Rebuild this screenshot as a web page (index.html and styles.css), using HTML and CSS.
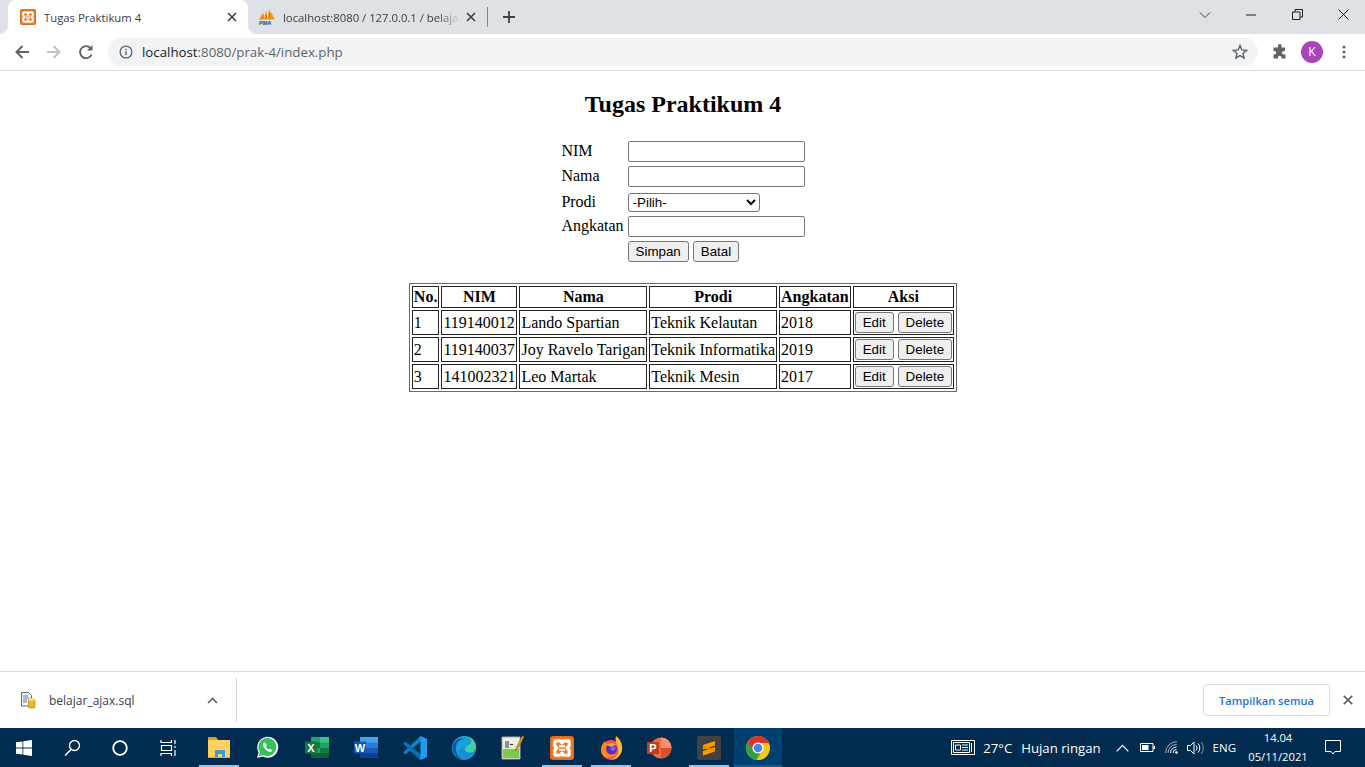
FILE: index.html
```html
<!DOCTYPE html>
<html lang="id">
<head>
<meta charset="utf-8">
<title>Tugas Praktikum 4</title>
<link rel="stylesheet" href="styles.css">
</head>
<body>
<svg class="defs" width="0" height="0" aria-hidden="true">
  <symbol id="xampp" viewBox="0 0 16 16">
    <rect width="16" height="16" rx="2" fill="#e4691f"/>
    <rect x="1" y="1" width="14" height="14" rx="1.5" fill="#f07a28"/>
    <path d="M4.2 3.2h2.4c1 0 .9 1.5 1.4 1.5s.4-1.5 1.4-1.5h2.4c.6 0 1 .4 1 1v2.3c0 .9-1.5.9-1.5 1.5s1.5.6 1.5 1.5v2.3c0 .6-.4 1-1 1H9.400c-1 0-.9-1.500-1.400-1.500s-.4 1.500-1.400 1.500H4.200c-.6 0-1-.4-1-1V9.500c0-.9 1.500-.9 1.500-1.500s-1.500-.6-1.500-1.500V4.200c0-.6.4-1 1-1z" fill="none" stroke="#fff" stroke-width="2.100"/>
    <path d="M6 6.800h4M6 9.200h4" stroke="#fff" stroke-width="1.300"/>
  </symbol>
</svg>

<header class="tabstrip">
  <div class="tab tab-active">
    <svg class="favicon" width="16" height="16"><use href="#xampp"/></svg>
    <span class="tab-title">Tugas Praktikum 4</span>
    <svg class="tab-x" width="10" height="10" viewBox="0 0 10 10"><path d="M1 1l8 8M9 1L1 9" stroke="#3c4043" stroke-width="1.600"/></svg>
  </div>
  <div class="tab tab-idle">
    <svg class="favicon" width="16" height="16" viewBox="0 0 16 16">
      <path d="M0 10.500L4 3.500l1.500 7zM5 10.500L7 1l1.500 9.500zM8.500 10.500L10 0l6 10.500z" fill="#f29a1c"/>
      <path d="M3 10.500L4.500 6M7 10.500l.5-5M11 10.500L10.500 4" stroke="#c8620f" stroke-width=".8"/>
      <text class="pma" x="0" y="15.500">PMA</text>
    </svg>
    <span class="tab-title tab-fade">localhost:8080 / 127.0.0.1 / belaja</span>
    <svg class="tab-x" width="10" height="10" viewBox="0 0 10 10"><path d="M1 1l8 8M9 1L1 9" stroke="#3c4043" stroke-width="1.600"/></svg>
  </div>
  <span class="tab-sep"></span>
  <div class="newtab">
    <svg width="12" height="12" viewBox="0 0 12 12"><path d="M6 0v12M0 6h12" stroke="#3c4043" stroke-width="1.800"/></svg>
  </div>
  <div class="winctl">
    <div class="winbtn"><svg width="12" height="8" viewBox="0 0 12 8"><path d="M1 1.500l5 5 5-5" fill="none" stroke="#3c4043" stroke-width="1"/></svg></div>
    <div class="winbtn"><svg width="10" height="2" viewBox="0 0 10 2"><path d="M0 1h10" stroke="#202124" stroke-width="1"/></svg></div>
    <div class="winbtn"><svg width="11" height="11" viewBox="0 0 11 11"><path d="M.5 3h7.500v7.500H.5zM3 3V.5h7.500V8H8" fill="none" stroke="#202124" stroke-width="1"/></svg></div>
    <div class="winbtn"><svg width="11" height="11" viewBox="0 0 11 11"><path d="M.5.500l10 10M10.500.500l-10 10" stroke="#202124" stroke-width="1"/></svg></div>
  </div>
</header>

<nav class="toolbar">
  <div class="navbtn"><svg width="16" height="16" viewBox="0 0 16 16"><path d="M15 8H2.500M8.500 2l-6 6 6 6" fill="none" stroke="#5f6368" stroke-width="2"/></svg></div>
  <div class="navbtn"><svg width="16" height="16" viewBox="0 0 16 16"><path d="M1 8h12.500M7.500 2l6 6-6 6" fill="none" stroke="#bdc1c6" stroke-width="2"/></svg></div>
  <div class="navbtn"><svg width="16" height="16" viewBox="0 0 16 16"><path d="M13.600 10.500A6 6 0 1 1 13 4.700" fill="none" stroke="#5f6368" stroke-width="1.900"/><path d="M14.500 1v5.500H9z" fill="#5f6368"/></svg></div>
  <div class="omnibox">
    <svg width="14" height="14" viewBox="0 0 14 14"><circle cx="7" cy="7" r="5.900" fill="none" stroke="#5f6368" stroke-width="1.300"/><path d="M7 6.200v4M7 3.800v1.400" stroke="#5f6368" stroke-width="1.400"/></svg>
    <span class="url">localhost<span class="url-dim">:8080/prak-4/index.php</span></span>
    <svg class="star" width="16" height="16" viewBox="0 0 16 16"><path d="M8 1.600l1.900 4.300 4.700.4-3.600 3.100 1.100 4.600L8 11.600l-4.100 2.400L5 9.400 1.400 6.300l4.700-.4z" fill="none" stroke="#5f6368" stroke-width="1.400"/></svg>
  </div>
  <div class="toolbar-right">
    <div class="navbtn"><svg width="16" height="16" viewBox="0 0 16 16"><path d="M6 1.500a1.800 1.800 0 0 1 3.500 0V3.500h3.500V7h-1.200a1.800 1.800 0 0 0 0 3.600H13.500V14.500H9.500v-1a1.800 1.800 0 0 0-3.600 0v1H1.500V10.500h1a1.800 1.800 0 0 0 0-3.600h-1V3.500H6z" fill="#5f6368"/></svg></div>
    <div class="navbtn"><span class="avatar">K</span></div>
    <div class="navbtn"><svg width="4" height="14" viewBox="0 0 4 14"><circle cx="2" cy="2" r="1.500" fill="#5f6368"/><circle cx="2" cy="7" r="1.500" fill="#5f6368"/><circle cx="2" cy="12" r="1.500" fill="#5f6368"/></svg></div>
  </div>
</nav>

<main class="page">
  <h2 class="title">Tugas Praktikum 4</h2>
  <form class="form-wrap">
    <table class="form-table">
      <tr><td>NIM</td><td><input class="field" type="text"></td></tr>
      <tr><td>Nama</td><td><input class="field" type="text"></td></tr>
      <tr><td>Prodi</td><td><select class="pick"><option>-Pilih-</option></select></td></tr>
      <tr><td>Angkatan</td><td><input class="field" type="text"></td></tr>
      <tr><td></td><td><button class="btn" type="button">Simpan</button> <button class="btn" type="button">Batal</button></td></tr>
    </table>
  </form>
  <table class="data-table">
    <tr><th>No.</th><th>NIM</th><th>Nama</th><th>Prodi</th><th>Angkatan</th><th>Aksi</th></tr>
    <tr><td>1</td><td>119140012</td><td>Lando Spartian</td><td>Teknik Kelautan</td><td>2018</td><td><button class="btn" type="button">Edit</button> <button class="btn" type="button">Delete</button></td></tr>
    <tr><td>2</td><td>119140037</td><td>Joy Ravelo Tarigan</td><td>Teknik Informatika</td><td>2019</td><td><button class="btn" type="button">Edit</button> <button class="btn" type="button">Delete</button></td></tr>
    <tr><td>3</td><td>141002321</td><td>Leo Martak</td><td>Teknik Mesin</td><td>2017</td><td><button class="btn" type="button">Edit</button> <button class="btn" type="button">Delete</button></td></tr>
  </table>
</main>

<section class="downloads">
  <div class="dl-item">
    <svg width="16" height="18" viewBox="0 0 16 18">
      <path d="M1.500 1.500h7l3 3V15h-10z" fill="#f4f6fa" stroke="#5a6a85"/>
      <path d="M3 5h5M3 7h6M3 9h4M3 11h4" stroke="#6c7a94" stroke-width="1"/>
      <rect x="8.500" y="8" width="6.500" height="9" rx="1.500" fill="#e9b92f" stroke="#a98112" stroke-width=".7"/>
      <ellipse cx="11.750" cy="8.500" rx="3" ry="1.200" fill="#f7e08a"/>
    </svg>
    <span class="dl-name">belajar_ajax.sql</span>
    <svg class="dl-caret" width="11" height="7" viewBox="0 0 11 7"><path d="M1 6l4.500-4.500L10 6" fill="none" stroke="#5f6368" stroke-width="1.700"/></svg>
  </div>
  <div class="dl-right">
    <span class="dl-all">Tampilkan semua</span>
    <svg class="dl-close" width="10" height="10" viewBox="0 0 10 10"><path d="M.8.800l8.400 8.400M9.200.800L.8 9.200" stroke="#5f6368" stroke-width="1.700"/></svg>
  </div>
</section>

<footer class="taskbar">
  <div class="tb-slot"><svg width="16" height="16" viewBox="0 0 16 16"><path d="M0 2.300l6.500-.9v6.200H0zM7.300 1.300L16 0v7.600H7.300zM0 8.400h6.500v6.200L0 13.700zM7.300 8.400H16V16l-8.700-1.300z" fill="#fff"/></svg></div>
  <div class="tb-slot"><svg width="17" height="17" viewBox="0 0 17 17"><circle cx="10.500" cy="6.500" r="5" fill="none" stroke="#fff" stroke-width="1.300"/><path d="M7 10.500L1 16.500" stroke="#fff" stroke-width="1.500"/></svg></div>
  <div class="tb-slot"><svg width="16" height="16" viewBox="0 0 16 16"><circle cx="8" cy="8" r="6.800" fill="none" stroke="#fff" stroke-width="1.800"/></svg></div>
  <div class="tb-slot"><svg width="17" height="16" viewBox="0 0 17 16"><path d="M1 0v2.500h10.500V0M1.500 5.500h10v5h-10zM1 16v-2.500h10.500V16M15 0v4M15 6v2M15 10v6" fill="none" stroke="#fff" stroke-width="1.200"/></svg></div>
  <div class="tb-apps">
    <div class="tb-app tb-open"><svg width="24" height="22" viewBox="0 0 24 22"><path d="M1 0h8l2 2.500H1z" fill="#d99a1c"/><path d="M1 3h22v17H1z" fill="#ffd25e"/><path d="M1 3h9l1-1H1z" fill="#e0a526"/><path d="M8 20v-7h10v7h-3v-3h-4v3z" fill="#3e9ae0"/><path d="M1 20h22v1H1z" fill="#e4ac2f"/></svg></div>
    <div class="tb-app"><svg width="23" height="23" viewBox="0 0 23 23"><path d="M1 22l1.600-5.600A10.500 10.500 0 1 1 6.800 20.500z" fill="#fff"/><path d="M2.800 20.200l1.200-4A9 9 0 1 1 7.200 19z" fill="#35c05b"/><path d="M8 6.500c-.8.500-1.300 1.500-1 2.800.6 2.700 3.800 6 6.500 6.600 1.300.3 2.500-.3 3-1.300l-2.400-1.800-1.200 1c-1.300-.6-2.500-1.800-3-3.200l1-1.200-1.600-2.700z" fill="#fff"/></svg></div>
    <div class="tb-app"><svg width="24" height="22" viewBox="0 0 24 22"><path d="M6 0h18v21H6z" fill="#21a366"/><path d="M15 0h9v5.500h-9z" fill="#33c481"/><path d="M6 5.500h9v5.500H6z" fill="#107c41"/><path d="M15 11h9v5h-9z" fill="#107c41"/><path d="M6 16h18v5H6z" fill="#185c37"/><rect y="4.500" width="12" height="12" fill="#0f7b3f"/><text class="ico-letter" x="6" y="14.500">X</text></svg></div>
    <div class="tb-app"><svg width="24" height="22" viewBox="0 0 24 22"><path d="M6 0h18v21H6z" fill="#2b7cd3"/><path d="M6 0h18v5.500H6z" fill="#41a5ee"/><path d="M6 11h18v5H6z" fill="#185abd"/><path d="M6 16h18v5H6z" fill="#103f91"/><rect y="4.500" width="12" height="12" fill="#1a55b8"/><text class="ico-letter" x="6" y="14.500">W</text></svg></div>
    <div class="tb-app"><svg width="24" height="24" viewBox="0 0 24 24"><path d="M17.500 0L24 3v18l-6.500 3L6 13.500z" fill="#1f9cf0"/><path d="M17.500 5.500v13L9 12z" fill="#01324f"/><path d="M17.500 0L0 16.500l2.500 2L17.500 5.500z" fill="#0e7fcb"/><path d="M0 7.500l2.500-2L17.500 18.500V24z" fill="#0a6fb8"/></svg></div>
    <div class="tb-app"><svg width="24" height="24" viewBox="0 0 24 24"><circle cx="12" cy="12" r="12" fill="#1a8fd6"/><path d="M1 9C3 2.500 9 0 12.500 0 19 0 24 5 24 11c0 4-3 5.500-6 5.500-3 0-5-1-5-3 0-.8.500-1.500 1-2-3-1-7 1-7 5 0 2.500 1.500 5 4 6.500C5 23 0 18 1 9z" fill="#1e9fd8"/><path d="M1 9C3 3 9 1.500 12.500 3c-4.500 0-8 3.500-8.500 8-.5 5 2 10 7 12.500C5 23.500 0 17 1 9z" fill="#0c59a4"/><path d="M13 13.500c0 2 2 3 5 3 3 0 6-1.500 6-5.500C24 5 19 0 12.500 0c6 0 8 5 6 7.500-1.500 1.800-5 2.500-5.500 6z" fill="#3fd0a4"/></svg></div>
    <div class="tb-app"><svg width="24" height="25" viewBox="0 0 24 25"><path d="M1 2h18v22H1z" fill="#f1efe4" stroke="#a9a9a0"/><path d="M2 14h16v9H2z" fill="#7ec84a"/><path d="M2 8h12v6H2z" fill="#e3f0d2"/><path d="M5 6v7M7 6v7M9 9.500h3" stroke="#333" stroke-width="1"/><path d="M21.500.500L15 13l-1 3 2.500-2L23 2z" fill="#e0a020" stroke="#7a5a10" stroke-width=".5"/></svg></div>
    <div class="tb-app tb-open"><svg width="24" height="24"><use href="#xampp"/></svg></div>
    <div class="tb-app tb-open"><svg width="24" height="24" viewBox="0 0 24 24"><circle cx="12" cy="14" r="10" fill="#ff4f5e"/><path d="M17 0c4 3 7 8 6 14-1 6-6 10-11 10 7-3 9-9 6-15-1-3-2-6-1-9z" fill="#ffbd30"/><path d="M2 14c0-4 2-7 4-9 0 2 1 3 3 3-1 3 0 10 8 10-2 4-14 6-15-4z" fill="#ff8a1f"/><circle cx="12.500" cy="13" r="5.500" fill="#5b2fb5"/><path d="M8 9c3-3 8-2 10 1-3-1-5 0-6 1-1-1-3-1-4-2z" fill="#ff9f24"/><circle cx="14" cy="12.500" r="2.400" fill="#9059ff"/></svg></div>
    <div class="tb-app"><svg width="25" height="22" viewBox="0 0 25 22"><circle cx="14" cy="11" r="10.500" fill="#ed6c47"/><path d="M14 .500A10.500 10.500 0 0 1 24.500 11H14z" fill="#ff8f6b"/><path d="M14 11h10.500A10.500 10.500 0 0 1 14 21.500z" fill="#d35230"/><rect y="5" width="12" height="12" fill="#c43e1c"/><text class="ico-letter" x="6" y="15">P</text></svg></div>
    <div class="tb-app tb-open"><svg width="24" height="24" viewBox="0 0 24 24"><rect width="24" height="24" rx="2" fill="#424242"/><path d="M6 9l12-4v4.500L6 13.500zM6 15l12-4v4.500L6 19.500z" fill="#ff9a00"/><path d="M6 9.500l12 4v2L6 11.500z" fill="#e8890a"/></svg></div>
    <div class="tb-app tb-active"><svg width="24" height="24" viewBox="0 0 24 24"><circle cx="12" cy="12" r="12" fill="#eaba1c"/><path d="M12 0a12 12 0 0 0-10.400 6L7 15l5-3h10.800A12 12 0 0 0 22.400 6 12 12 0 0 0 12 0z" fill="#d8362a"/><path d="M1.600 6a12 12 0 0 0 9 17.900L16.200 15H7z" fill="#2f9e44"/><path d="M12 7h10.400a12 12 0 0 1-11.800 17l5.600-9.500z" fill="#f5c518"/><circle cx="12" cy="12" r="5.600" fill="#fff"/><circle cx="12" cy="12" r="4.300" fill="#4a86e8"/></svg></div>
  </div>
  <div class="tray">
    <svg class="tr-news" width="24" height="15" viewBox="0 0 24 15"><path d="M.5.500h23v14H.5z" fill="none" stroke="#fff"/><path d="M2.500 2.500h16v10h-16z" fill="none" stroke="#fff"/><path d="M4.500 5h5v5h-5zM11 5h6M11 7.500h6M11 10h6M20.500 3v9" fill="none" stroke="#fff" stroke-width="1"/></svg>
    <span class="tr-temp">27°C</span>
    <span class="tr-weather">Hujan ringan</span>
    <svg class="tr-caret" width="13" height="8" viewBox="0 0 13 8"><path d="M.7 7.300l5.800-6 5.800 6" fill="none" stroke="#fff" stroke-width="1.200"/></svg>
    <svg class="tr-batt" width="15" height="9" viewBox="0 0 15 9"><path d="M.5.500h12.500v8H.5z" fill="none" stroke="#fff"/><path d="M2 2h6.500v5H2zM13.500 3H15v3h-1.500z" fill="#fff"/></svg>
    <svg class="tr-wifi" width="14" height="13" viewBox="0 0 14 13"><path d="M.7 12A11 11 0 0 1 12 .7M3 12a8.500 8.500 0 0 1 8.500-8.500" fill="none" stroke="#9fb1c2" stroke-width="1"/><path d="M5.500 12a6 6 0 0 1 6-6M8 12a3.500 3.500 0 0 1 3.500-3.500" fill="none" stroke="#fff" stroke-width="1"/><circle cx="11.500" cy="11.500" r="1.300" fill="#fff"/></svg>
    <svg class="tr-vol" width="17" height="14" viewBox="0 0 17 14"><path d="M.5 4.500h3L7 1v12L3.500 9.500h-3z" fill="none" stroke="#fff"/><path d="M9 4.500a3.500 3.500 0 0 1 0 5M11 2.500a6.500 6.500 0 0 1 0 9" fill="none" stroke="#fff"/><path d="M14 1a9 9 0 0 1 0 12" fill="none" stroke="#7e93a8"/></svg>
    <span class="tr-lang">ENG</span>
    <div class="tr-clock"><span>14.04</span><span>05/11/2021</span></div>
    <svg class="tr-note" width="16" height="15" viewBox="0 0 16 15"><path d="M.5.500h15v11H10l-2 2.500-2-2.500H.5z" fill="none" stroke="#fff"/></svg>
  </div>
</footer>
</body>
</html>
```

FILE: styles.css
```css
* { box-sizing: border-box; }
html, body { height: 100%; }
body {
  margin: 0;
  height: 767px;
  overflow: hidden;
  display: flex;
  flex-direction: column;
  background: #fff;
  font-family: "Liberation Serif", "Times New Roman", serif;
  font-size: 16px;
  color: #000;
}
.defs { position: absolute; }

/* tab strip */
.tabstrip {
  flex: 0 0 34px;
  display: flex;
  align-items: stretch;
  padding-left: 8px;
  background: #dee1e6;
  font-family: "Open Sans", "Noto Sans", sans-serif;
  font-size: 11.300px;
  color: #3c4043;
}
.tab {
  flex: 0 0 240px;
  min-width: 0;
  width: 240px;
  position: relative;
  display: flex;
  align-items: center;
  padding: 0 11px 0 12px;
}
.tab-active { background: #fff; border-radius: 8px 8px 0 0; color: #3c4043; }
.tab-active::before, .tab-active::after {
  content: "";
  position: absolute;
  bottom: 0;
  width: 8px;
  height: 8px;
}
.tab-active::before { left: -8px; background: radial-gradient(circle at 0 0, #dee1e6 7.5px, #fff 8px); }
.tab-active::after { right: -8px; background: radial-gradient(circle at 100% 0, #dee1e6 7.5px, #fff 8px); }
.tab-idle { padding-left: 11px; padding-right: 12px; }
.favicon { flex: none; }
.tab-title {
  flex: 1;
  min-width: 0;
  margin-left: 8px;
  white-space: nowrap;
}
.tab-fade { -webkit-mask-image: linear-gradient(90deg, #000 88%, transparent 100%); mask-image: linear-gradient(90deg, #000 88%, transparent 100%); }
.tab-x { flex: none; margin-left: 6px; }
.pma { font: italic bold 5.500px "Liberation Sans", sans-serif; fill: #25407a; }
.tab-sep { flex: none; width: 1px; height: 20px; margin: 7px 0 0 -1px; background: #80868b; }
.newtab { width: 42px; display: flex; align-items: center; justify-content: center; }
.winctl { margin-left: auto; margin-right: -1px; display: flex; height: 29px; }
.winbtn { width: 46px; display: flex; align-items: center; justify-content: center; }

/* toolbar */
.toolbar {
  flex: 0 0 37px;
  display: flex;
  align-items: center;
  padding: 0 5px 1px 6px;
  background: #fff;
  border-bottom: 1px solid #dadce0;
}
.navbtn { flex: none; width: 32px; height: 28px; display: flex; align-items: center; justify-content: center; }
.omnibox {
  flex: 1;
  height: 28px;
  margin-left: 6px;
  display: flex;
  align-items: center;
  padding: 0 10px 0 11px;
  border-radius: 14px;
  background: #f1f3f4;
}
.url {
  margin-left: 9px;
  font-family: "Open Sans", "Noto Sans", sans-serif;
  font-size: 13.270px;
  color: #202124;
}
.url-dim { color: #5f6368; }
.star { margin-left: auto; margin-right: 0; }
.toolbar-right { display: flex; margin-left: 6px; }
.avatar {
  width: 22px;
  height: 22px;
  border-radius: 50%;
  background: #a845b9;
  color: #fff;
  display: flex;
  align-items: center;
  justify-content: center;
  font: 12px "Open Sans", sans-serif;
}

/* page content */
.page { flex: 1; min-height: 0; padding-left: 1px; }
.title { margin: 20px 0; text-align: center; font-size: 24px; line-height: 27px; font-weight: bold; }
.form-wrap { margin: 0 0 18px; }
.form-table { margin: 0 auto; border-spacing: 2px; }
.form-table td { padding: 1px; vertical-align: baseline; }
.field {
  display: inline-block;
  width: 177px;
  height: 21px;
  padding: 1px 2px;
  border: 1px solid #767676;
  border-radius: 2px;
  background: #fff;
  font: 13.333px "Liberation Sans", Arial, sans-serif;
}
.pick {
  width: 132px;
  height: 19px;
  margin-top: 2px;
  border: 1px solid #767676;
  border-radius: 3px;
  background: #fff;
  font: 13.333px "Liberation Sans", Arial, sans-serif;
  color: #000;
}
.btn {
  height: 21px;
  padding: 1px 7px;
  border: 1px solid #767676;
  border-radius: 3px;
  background: #efefef;
  color: #000;
  font: 13.333px "Liberation Sans", Arial, sans-serif;
}
.data-table { margin: 0 auto; border: 1px solid #6a6a6a; border-spacing: 2px; }
.data-table th, .data-table td { padding: 1px; border: 1px solid #222; }

/* download shelf */
.downloads {
  flex: 0 0 57px;
  display: flex;
  align-items: center;
  background: #fff;
  border-top: 1px solid #dadce0;
  font-family: "Open Sans", "Noto Sans", sans-serif;
}
.dl-item {
  width: 237px;
  height: 44px;
  display: flex;
  align-items: center;
  padding: 0 18px 0 20px;
  border-right: 1px solid #d4d5d7;
}
.dl-name { margin-left: 13px; font-size: 12px; color: #3c4043; }
.dl-caret { margin-left: auto; }
.dl-right { margin-left: auto; display: flex; align-items: center; }
.dl-all {
  width: 127px;
  height: 32px;
  display: flex;
  align-items: center;
  justify-content: center;
  border: 1px solid #dadce0;
  border-radius: 4px;
  color: #1a73e8;
  font-size: 11.100px;
  font-weight: 600;
}
.dl-close { margin: 0 12px 0 13px; }

/* taskbar */
.taskbar {
  flex: 0 0 39px;
  display: flex;
  align-items: stretch;
  background: #012c50;
  color: #fff;
  font-family: "Open Sans", "Noto Sans", sans-serif;
}
.tb-slot { flex: none; width: 48px; display: flex; align-items: center; justify-content: center; }
.tb-apps { display: flex; margin-left: 2px; }
.tb-app { flex: none; width: 49px; display: flex; align-items: center; justify-content: center; position: relative; }
.tb-open::after, .tb-active::after {
  content: "";
  position: absolute;
  bottom: 0;
  left: 5px;
  right: 4px;
  height: 2px;
  background: #99c6e8;
}
.tb-active { background: #00406f; width: 48px; margin-left: 1px; }
.tb-active::after { left: 0; right: 0; background: #1a5a88; }
.ico-letter { font: bold 11px "Liberation Sans", sans-serif; fill: #fff; text-anchor: middle; }
.tray { margin-left: auto; display: flex; align-items: center; font-size: 13.200px; }
.tr-news { margin-left: 0; }
.tr-temp { margin-left: 8px; }
.tr-weather { margin-left: 9px; }
.tr-caret { margin-left: 15px; }
.tr-batt { margin-left: 11px; }
.tr-wifi { margin-left: 10px; }
.tr-vol { margin-left: 8px; }
.tr-lang { margin-left: 9px; font-size: 11.500px; }
.tr-clock {
  width: 84px;
  display: flex;
  flex-direction: column;
  align-items: center;
  gap: 3px;
  margin-left: 0;
  font-size: 11.200px;
  line-height: 16px;
}
.tr-note { margin: 0 24px 0 5px; }
```
